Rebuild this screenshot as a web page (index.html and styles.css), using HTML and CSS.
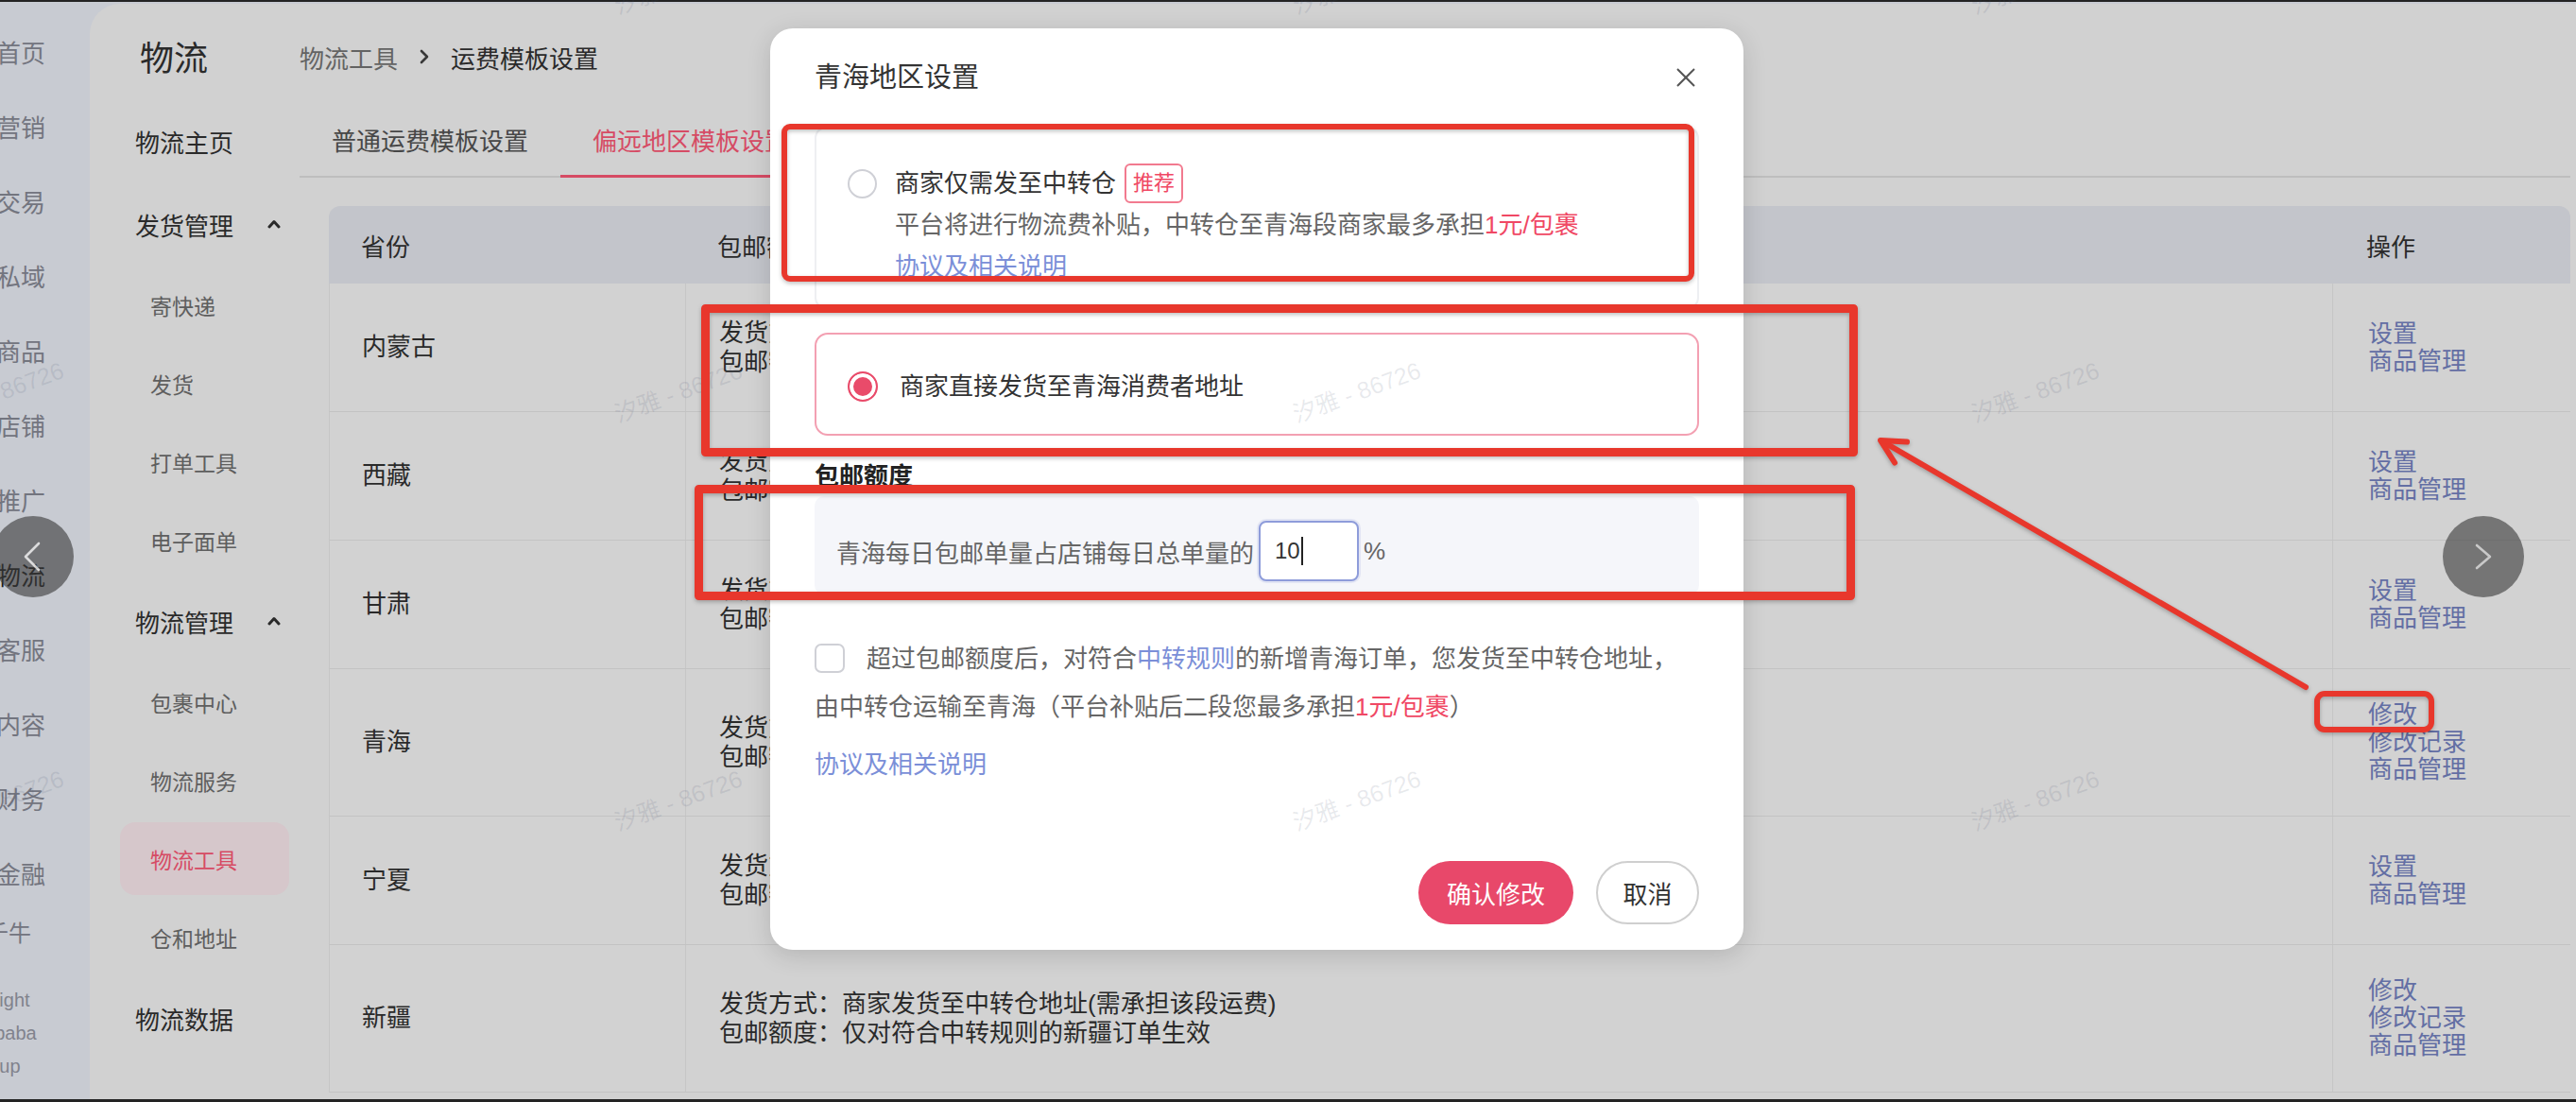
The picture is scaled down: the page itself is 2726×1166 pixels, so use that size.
FILE: index.html
```html
<!DOCTYPE html>
<html lang="zh-CN">
<head>
<meta charset="utf-8">
<title>运费模板设置</title>
<link rel="stylesheet" href="styles.css">
</head>
<body>
<div class="screen">
  <aside class="global-nav">
    <a class="nav-item">首页</a>
    <a class="nav-item">营销</a>
    <a class="nav-item">交易</a>
    <a class="nav-item">私域</a>
    <a class="nav-item">商品</a>
    <a class="nav-item">店铺</a>
    <a class="nav-item">推广</a>
    <a class="nav-item active">物流</a>
    <a class="nav-item">客服</a>
    <a class="nav-item">内容</a>
    <a class="nav-item">财务</a>
    <a class="nav-item">金融</a>
    <a class="nav-item nav-qn">千牛</a>
    <div class="copyright">
      <span class="cr-1">Copyright</span>
      <span class="cr-2">Alibaba</span>
      <span class="cr-3">Group</span>
    </div>
  </aside>

  <div class="workspace">
    <nav class="sub-nav">
      <h1 class="sub-title">物流</h1>
      <a class="group-head">物流主页</a>
      <div class="group-head">发货管理<svg class="caret" viewBox="0 0 14 10"><polyline points="2,8 7,2.5 12,8"/></svg></div>
      <a class="sub-item"><span>寄快递</span></a>
      <a class="sub-item"><span>发货</span></a>
      <a class="sub-item"><span>打单工具</span></a>
      <a class="sub-item"><span>电子面单</span></a>
      <div class="group-head">物流管理<svg class="caret" viewBox="0 0 14 10"><polyline points="2,8 7,2.5 12,8"/></svg></div>
      <a class="sub-item"><span>包裹中心</span></a>
      <a class="sub-item"><span>物流服务</span></a>
      <a class="sub-item active"><span>物流工具</span></a>
      <a class="sub-item"><span>仓和地址</span></a>
      <a class="group-head">物流数据</a>
    </nav>

    <main class="content">
      <div class="breadcrumb">
        <span class="crumb-parent">物流工具</span>
        <svg class="crumb-sep" viewBox="0 0 10 16"><polyline points="2,2 8,8 2,14"/></svg>
        <span class="crumb-current">运费模板设置</span>
      </div>

      <div class="tabs">
        <a class="tab">普通运费模板设置</a>
        <a class="tab active">偏远地区模板设置</a>
      </div>

      <div class="table">
        <div class="table-head">
          <div class="cell c-prov">省份</div>
          <div class="cell c-rule">包邮额度及发货方式</div>
          <div class="cell c-op">操作</div>
        </div>
        <div class="table-row">
          <div class="cell c-prov">内蒙古</div>
          <div class="cell c-rule"><p>发货方式：商家发货至中转仓地址(需承担该段运费)</p><p>包邮额度：仅对符合中转规则的内蒙古订单生效</p></div>
          <div class="cell c-op"><a>设置</a><a>商品管理</a></div>
        </div>
        <div class="table-row">
          <div class="cell c-prov">西藏</div>
          <div class="cell c-rule"><p>发货方式：商家发货至中转仓地址(需承担该段运费)</p><p>包邮额度：仅对符合中转规则的西藏订单生效</p></div>
          <div class="cell c-op"><a>设置</a><a>商品管理</a></div>
        </div>
        <div class="table-row">
          <div class="cell c-prov">甘肃</div>
          <div class="cell c-rule"><p>发货方式：商家发货至中转仓地址(需承担该段运费)</p><p>包邮额度：仅对符合中转规则的甘肃订单生效</p></div>
          <div class="cell c-op"><a>设置</a><a>商品管理</a></div>
        </div>
        <div class="table-row">
          <div class="cell c-prov">青海</div>
          <div class="cell c-rule"><p>发货方式：商家直接发货至青海消费者地址</p><p>包邮额度：青海每日包邮单量占店铺每日总单量的10%</p></div>
          <div class="cell c-op"><a>修改</a><a>修改记录</a><a>商品管理</a></div>
        </div>
        <div class="table-row">
          <div class="cell c-prov">宁夏</div>
          <div class="cell c-rule"><p>发货方式：商家发货至中转仓地址(需承担该段运费)</p><p>包邮额度：仅对符合中转规则的宁夏订单生效</p></div>
          <div class="cell c-op"><a>设置</a><a>商品管理</a></div>
        </div>
        <div class="table-row">
          <div class="cell c-prov">新疆</div>
          <div class="cell c-rule"><p>发货方式：商家发货至中转仓地址(需承担该段运费)</p><p>包邮额度：仅对符合中转规则的新疆订单生效</p></div>
          <div class="cell c-op"><a>修改</a><a>修改记录</a><a>商品管理</a></div>
        </div>
      </div>
    </main>
  </div>
</div>

<div class="mask"></div>

<section class="modal">
  <header class="modal-head">
    <h2 class="modal-title">青海地区设置</h2>
    <svg class="modal-close" viewBox="0 0 24 24"><line x1="3" y1="3" x2="21" y2="21"/><line x1="21" y1="3" x2="3" y2="21"/></svg>
  </header>

  <div class="option">
    <span class="radio"></span>
    <div class="option-body">
      <div class="option-title">商家仅需发至中转仓<span class="tag">推荐</span></div>
      <p class="option-desc">平台将进行物流费补贴，中转仓至青海段商家最多承担<em>1元/包裹</em></p>
      <a class="link">协议及相关说明</a>
    </div>
  </div>

  <div class="option option-checked">
    <span class="radio radio-on"></span>
    <div class="option-title">商家直接发货至青海消费者地址</div>
  </div>

  <h3 class="section-title">包邮额度</h3>
  <div class="quota">
    <span>青海每日包邮单量占店铺每日总单量的</span>
    <span class="quota-input">10<i class="caret-bar"></i></span>
    <span>%</span>
  </div>

  <p class="check-line"><span class="checkbox"></span>超过包邮额度后，对符合<a class="link">中转规则</a>的新增青海订单，您发货至中转仓地址，<br>由中转仓运输至青海（平台补贴后二段您最多承担<em>1元/包裹</em>）</p>
  <a class="link link-block">协议及相关说明</a>

  <footer class="modal-foot">
    <button class="btn btn-primary">确认修改</button>
    <button class="btn btn-default">取消</button>
  </footer>
</section>

<div class="watermark-layer">
  <div class="watermarks">
    <span>汐雅 - 86726</span><span>汐雅 - 86726</span><span>汐雅 - 86726</span><span>汐雅 - 86726</span><span>汐雅 - 86726</span>
    <span>汐雅 - 86726</span><span>汐雅 - 86726</span><span>汐雅 - 86726</span><span>汐雅 - 86726</span><span>汐雅 - 86726</span>
    <span>汐雅 - 86726</span><span>汐雅 - 86726</span><span>汐雅 - 86726</span><span>汐雅 - 86726</span><span>汐雅 - 86726</span>
  </div>
</div>

<button class="pager pager-prev"><svg viewBox="0 0 18 32"><polyline points="16,2 2,16 16,30"/></svg></button>
<button class="pager pager-next"><svg viewBox="0 0 18 28"><polyline points="2,2 16,14 2,26"/></svg></button>

<svg class="annotations" viewBox="0 0 2726 1166">
  <g class="ink">
    <rect x="830" y="134" width="960" height="161" rx="6" stroke-width="6"/>
    <rect x="746.5" y="326.5" width="1215" height="152" stroke-width="9"/>
    <rect x="739.5" y="517.5" width="1219" height="113" stroke-width="9"/>
    <rect x="2452" y="734" width="121" height="38" rx="8" stroke-width="6"/>
    <line x1="2440" y1="727" x2="1992" y2="467" stroke-width="6"/>
    <polyline points="2018,467.5 1990,466 2005,489.5" stroke-width="6"/>
  </g>
</svg>
</body>
</html>
```

FILE: styles.css
```css
* {
  box-sizing: border-box;
  margin: 0;
  padding: 0;
}

html,
body {
  width: 2726px;
  height: 1166px;
  overflow: hidden;
}

body {
  position: relative;
  background: #2a2a2a;
  font-family: "Liberation Sans", "Noto Sans CJK SC", sans-serif;
  color: #333;
}

a {
  text-decoration: none;
  color: inherit;
}

em {
  font-style: normal;
}

/* ---------- page frame ---------- */
.screen {
  display: flex;
  height: 1161px;
  margin-top: 2px;
  background: #eff2fb;
}

/* ---------- global navigation ---------- */
.global-nav {
  width: 95px;
  flex: none;
  overflow: hidden;
  padding-top: 15.5px;
  background: #eff2fb;
}

.nav-item {
  display: block;
  height: 79px;
  line-height: 79px;
  margin-left: -4px;
  font-size: 26px;
  color: #8a8c98;
  white-space: nowrap;
}

.nav-item.active {
  color: #1f1f1f;
}

.nav-qn {
  height: 44px;
  line-height: 44px;
  margin-left: -15px;
  font-size: 24px;
}

.copyright {
  display: flex;
  flex-direction: column;
  margin: 31px 0 0 -54px;
  font-size: 20px;
  line-height: 35px;
  color: #9a9ca8;
  white-space: nowrap;
}

.cr-2 {
  padding-left: 26px;
}

.cr-3 {
  padding-left: 20px;
}

/* ---------- workspace ---------- */
.workspace {
  flex: 1;
  display: flex;
  margin-top: 2px;
  background: #f9f9f9;
  border-top-left-radius: 32px;
}

.sub-nav {
  width: 222px;
  flex: none;
  padding-top: 34px;
}

.sub-title {
  height: 50px;
  line-height: 50px;
  margin: 0 0 17px 53px;
  font-size: 36px;
  font-weight: normal;
  color: #333;
}

.group-head {
  display: flex;
  align-items: center;
  justify-content: space-between;
  height: 88px;
  padding: 0 20px 0 48px;
  font-size: 26px;
  color: #333;
}

.caret {
  width: 14px;
  height: 10px;
  fill: none;
  stroke: #333;
  stroke-width: 3;
  stroke-linecap: round;
  stroke-linejoin: round;
}

.sub-item {
  display: flex;
  align-items: center;
  height: 83px;
  padding-left: 32px;
}

.sub-item span {
  display: flex;
  align-items: center;
  width: 179px;
  height: 77px;
  padding-left: 32px;
  border-radius: 16px;
  font-size: 23px;
  color: #717171;
}

.sub-item.active span {
  background: #ffedf2;
  color: #ff5a78;
}

/* ---------- content ---------- */
.content {
  flex: 1;
  min-width: 0;
  padding: 36px 6px 0 0;
}

.breadcrumb {
  display: flex;
  align-items: center;
  gap: 23px;
  height: 40px;
  font-size: 26px;
}

.crumb-parent {
  color: #777;
}

.crumb-current {
  color: #333;
}

.crumb-sep {
  width: 10px;
  height: 16px;
  fill: none;
  stroke: #444;
  stroke-width: 2.6;
  stroke-linecap: round;
  stroke-linejoin: round;
}

.tabs {
  display: flex;
  margin-top: 38px;
  border-bottom: 2px solid #e3e3e3;
}

.tab {
  padding: 12px 34px 16px;
  line-height: 40px;
  font-size: 26px;
  color: #555;
}

.tab.active {
  color: #ff5a78;
  border-bottom: 3px solid #ff5a78;
  margin-bottom: -2px;
  padding-bottom: 15px;
}

/* ---------- table ---------- */
.table {
  margin: 30px 0 0 31px;
}

.table-head,
.table-row {
  display: grid;
  grid-template-columns: 376px 1743px 1fr;
}

.table-head {
  height: 82px;
  align-items: center;
  background: #e9ebf2;
  border-radius: 12px 12px 0 0;
  font-size: 26px;
  color: #333;
}

.table-row {
  min-height: 136px;
  background: #fbfbfb;
  border-left: 1px solid #ececec;
  border-bottom: 1px solid #e9e9e9;
  font-size: 26px;
}

.cell.c-prov {
  padding-left: 34px;
}

.cell.c-rule {
  padding-left: 35px;
  white-space: nowrap;
}

.cell.c-op {
  padding-left: 37px;
}

.table-row .cell {
  display: flex;
  flex-direction: column;
  justify-content: center;
}

.table-row .c-prov {
  line-height: 31px;
  color: #333;
}

.table-row .c-rule {
  line-height: 31px;
  color: #333;
  border-left: 1px solid #ececec;
}

.table-row .c-op {
  padding-top: 34px;
  padding-bottom: 34px;
  line-height: 29px;
  color: #7785c4;
  border-left: 1px solid #ececec;
}

/* ---------- overlay ---------- */
.mask {
  position: absolute;
  inset: 0;
  background: rgba(0, 0, 0, 0.16);
}

/* ---------- dialog ---------- */
.modal {
  position: absolute;
  left: 815px;
  top: 30px;
  width: 1030px;
  height: 975px;
  display: flex;
  flex-direction: column;
  padding: 0 47px 27px;
  background: #fff;
  border-radius: 24px;
  box-shadow: 0 6px 26px rgba(0, 0, 0, 0.14);
  font-size: 26px;
  color: #333;
}

.modal-head {
  display: flex;
  align-items: center;
  justify-content: space-between;
  padding-top: 32px;
}

.modal-title {
  line-height: 40px;
  font-size: 29px;
  font-weight: normal;
  color: #333;
}

.modal-close {
  width: 24px;
  height: 24px;
  margin-right: 2px;
  stroke: #555;
  stroke-width: 2;
}

.option {
  display: flex;
  gap: 19px;
  margin-top: 32px;
  padding: 36px 30px 21px 33px;
  border: 2px solid #eeeff2;
  border-radius: 12px;
}

.option-checked {
  align-items: center;
  gap: 23px;
  margin-top: 25px;
  padding: 29px 33px 24px;
  border-color: #f3a0b2;
  border-radius: 14px;
}

.radio {
  flex: none;
  width: 31px;
  height: 31px;
  margin-top: 6.5px;
  border: 2px solid #cfd0d6;
  border-radius: 50%;
}

.radio-on {
  width: 32px;
  height: 32px;
  margin-top: 0;
  border-color: #e94b6a;
  background: #e94b6a;
  box-shadow: inset 0 0 0 4px #fff;
}

.option-title {
  display: flex;
  align-items: center;
  line-height: 44px;
  color: #333;
}

.option-checked .option-title {
  line-height: 52px;
}

.tag {
  height: 42px;
  margin-left: 9px;
  padding: 0 7px;
  border: 2px solid #f27a8f;
  border-radius: 6px;
  line-height: 38px;
  font-size: 22px;
  color: #f04864;
}

.option-desc {
  line-height: 44px;
  color: #666;
}

.option-desc em,
.check-line em {
  color: #f04864;
}

.link {
  color: #7b8fd8;
}

.option-body .link {
  display: block;
  line-height: 44px;
}

.section-title {
  margin-top: 25px;
  line-height: 36px;
  font-size: 26px;
  font-weight: bold;
  color: #222;
}

.quota {
  display: flex;
  align-items: center;
  margin-top: 3px;
  padding: 26px 23px 14px;
  background: #f5f6fa;
  border-radius: 10px;
  color: #666;
}

.quota-input {
  display: flex;
  align-items: center;
  width: 106px;
  height: 64px;
  margin: 0 5px;
  padding-left: 15px;
  background: #fff;
  border: 2px solid #8e9cda;
  border-radius: 8px;
  box-shadow: 0 0 0 2px rgba(142, 156, 218, 0.18);
  font-size: 24px;
  color: #333;
}

.caret-bar {
  width: 2px;
  height: 30px;
  margin-left: 1px;
  background: #222;
}

.check-line {
  margin-top: 43px;
  line-height: 51px;
  color: #666;
}

.checkbox {
  display: inline-block;
  width: 32px;
  height: 31px;
  margin-right: 23px;
  vertical-align: middle;
  position: relative;
  top: -3px;
  border: 2px solid #cfd0d6;
  border-radius: 7px;
}

.link-block {
  display: block;
  margin-top: 15px;
  line-height: 40px;
}

.modal-foot {
  display: flex;
  justify-content: flex-end;
  gap: 24px;
  margin-top: auto;
}

.btn {
  height: 67px;
  border-radius: 34px;
  font-family: inherit;
  font-size: 26px;
}

.btn-primary {
  padding: 0 30px;
  border: none;
  background: #e8486a;
  color: #fff;
}

.btn-default {
  padding: 0 26.5px;
  border: 2px solid #cfcfcf;
  background: #fff;
  color: #333;
}

/* ---------- watermark ---------- */
.watermark-layer {
  position: absolute;
  inset: 0;
  overflow: hidden;
  pointer-events: none;
}

.watermarks {
  display: grid;
  grid-template-columns: repeat(5, 718px);
  grid-auto-rows: 432px;
  margin: -235px 0 0 -360px;
}

.watermarks span {
  display: flex;
  align-items: center;
  justify-content: center;
  transform: rotate(-20deg);
  font-size: 25px;
  color: rgba(70, 80, 110, 0.12);
  white-space: nowrap;
}

/* ---------- viewer arrows ---------- */
.pager {
  position: absolute;
  top: 546px;
  width: 86px;
  height: 86px;
  display: flex;
  align-items: center;
  justify-content: center;
  border: none;
  border-radius: 50%;
  background: rgba(60, 60, 60, 0.62);
}

.pager-prev {
  left: -8px;
}

.pager-next {
  left: 2585px;
}

.pager svg {
  fill: none;
  stroke-width: 2.6;
  stroke-linecap: round;
  stroke-linejoin: round;
}

.pager-prev svg {
  width: 18px;
  height: 32px;
  margin-left: -3px;
  stroke: rgba(255, 255, 255, 0.75);
}

.pager-next svg {
  width: 18px;
  height: 28px;
  stroke: #c9c9c9;
}

/* ---------- markup layer ---------- */
.annotations {
  position: absolute;
  left: 0;
  top: 0;
  width: 2726px;
  height: 1166px;
  pointer-events: none;
}

.ink {
  fill: none;
  stroke: #e8372c;
  stroke-linecap: round;
  stroke-linejoin: round;
  filter: drop-shadow(0 2px 2px rgba(0, 0, 0, 0.25));
}
```
